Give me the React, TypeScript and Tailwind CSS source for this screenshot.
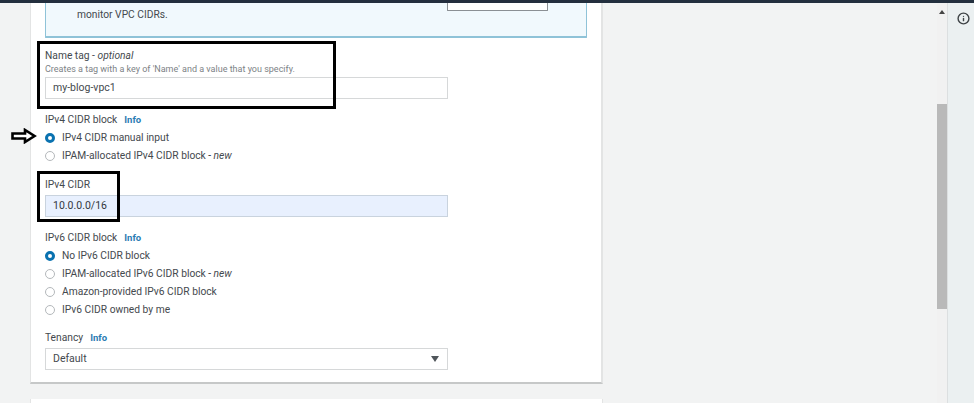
/**
 * Create VPC form
 * Screenshot of the VPC settings card with annotation boxes on top
 */

import { Info as InfoIcon } from 'lucide-react';

function Info() {
  return <span className="ml-[7px] text-[9.5px] font-bold leading-[14px] text-[#2b7cb3]">Info</span>;
}

function Radio({ label, checked, suffix }: { label: string; checked?: boolean; suffix?: string }) {
  return (
    <div className="flex h-[18px] items-center">
      {checked ? (
        <span className="h-[10px] w-[10px] rounded-full border-[3px] border-[#0a72b0] bg-white" />
      ) : (
        <span className="h-[10px] w-[10px] rounded-full border border-[#b4b8bb] bg-white" />
      )}
      <span className="ml-[7px] whitespace-nowrap text-[10.25px] text-[#44494e]">
        {label}
        {suffix && <i> - {suffix}</i>}
      </span>
    </div>
  );
}

function FieldLabel({ children }: { children: React.ReactNode }) {
  return <div className="flex h-[14px] items-center text-[10.25px] leading-[14px] text-[#44494e]">{children}</div>;
}

export default function App() {
  return (
    <div className="relative flex h-[403px] w-[974px] flex-col overflow-hidden bg-[#f2f3f3] font-['Roboto',sans-serif]">
      <div className="h-[3px] shrink-0 bg-[#232f3e]" />
      <div className="flex min-h-0 flex-1">
        <main className="min-w-0 flex-1 pl-[30px]">
          <section className="h-[381px] w-[573px] border-r-2 border-b-2 border-l border-r-[#e3e4e4] border-b-[#c6c8c8] border-l-[#e3e4e4] bg-white px-[14px]">
            <div className="relative h-[35px] w-[542px] rounded-b-[1px] border-r border-b-2 border-l border-[#8fc3d8] bg-[#f1f9fd] pl-[31px] pt-[5px]">
              <p className="text-[10.25px] leading-[14px] text-[#44494e]">monitor VPC CIDRs.</p>
              <div className="absolute left-[401px] top-0 h-[8px] w-[101px] rounded-b-[1px] border-r border-b border-l border-[#8b9094] bg-white" />
            </div>

            <div className="pt-[11px]">
              <FieldLabel>
                <span>
                  Name tag - <i>optional</i>
                </span>
              </FieldLabel>
              <p className="text-[9px] leading-[12px] text-[#7d8286]">Creates a tag with a key of 'Name' and a value that you specify.</p>
              <div className="mt-[2px] flex h-[22px] w-[403px] items-center border border-[#d6d8d9] bg-white pl-[7px] text-[10.5px] text-[#44494e]">
                my-blog-vpc1
              </div>
            </div>

            <div className="pt-[14px]">
              <FieldLabel>
                <span>IPv4 CIDR block</span>
                <Info />
              </FieldLabel>
              <div className="mt-[2px]">
                <Radio label="IPv4 CIDR manual input" checked />
                <Radio label="IPAM-allocated IPv4 CIDR block" suffix="new" />
              </div>
            </div>

            <div className="pt-[13px]">
              <FieldLabel>IPv4 CIDR</FieldLabel>
              <div className="mt-[3px] flex h-[22px] w-[403px] items-center border border-[#c9d3de] bg-[#e8f0fe] pl-[7px] text-[10.5px] text-[#33383c]">
                10.0.0.0/16
              </div>
            </div>

            <div className="pt-[14px]">
              <FieldLabel>
                <span>IPv6 CIDR block</span>
                <Info />
              </FieldLabel>
              <div className="mt-[2px]">
                <Radio label="No IPv6 CIDR block" checked />
                <Radio label="IPAM-allocated IPv6 CIDR block" suffix="new" />
                <Radio label="Amazon-provided IPv6 CIDR block" />
                <Radio label="IPv6 CIDR owned by me" />
              </div>
            </div>

            <div className="pt-[12px]">
              <FieldLabel>
                <span>Tenancy</span>
                <Info />
              </FieldLabel>
              <div className="mt-[3px] flex h-[22px] w-[403px] items-center justify-between border border-[#d6d8d9] bg-white pl-[7px] pr-[8px] text-[10.5px] text-[#44494e]">
                Default
                <span className="h-0 w-0 border-x-[4.5px] border-t-[6px] border-x-transparent border-t-[#50565b]" />
              </div>
            </div>
          </section>
          <div className="mt-[15px] h-[10px] w-[573px] border-x border-[#e3e4e4] bg-white" />
        </main>

        {/* scrollbar */}
        <div className="relative w-[11px] shrink-0 border-r border-[#dcdfe0] bg-[#f1f1f1]">
          <span className="absolute left-[2px] top-[7px] h-0 w-0 border-x-[3.5px] border-b-[4px] border-x-transparent border-b-[#444]" />
          <div className="absolute left-0 top-[101px] h-[205px] w-[10px] bg-[#b9b9b9]" />
        </div>

        <aside className="flex w-[26px] shrink-0 justify-center bg-[#ebf0f1] pl-[4px] pt-[9px]">
          <InfoIcon className="h-[13px] w-[13px] text-[#3f4447]" strokeWidth={2.6} />
        </aside>
      </div>

      {/* annotations drawn over the screenshot */}
      <div className="pointer-events-none absolute left-[37px] top-[41px] h-[68px] w-[299px] border-[3px] border-black" />
      <div className="pointer-events-none absolute left-[37px] top-[171px] h-[51px] w-[83px] border-[3px] border-black" />
      <svg className="absolute left-[11px] top-[128px]" width="26" height="16" viewBox="0 0 26 16">
        <path d="M1.5 5.5H14V2l9.5 6L14 14v-3.5H1.5z" fill="white" stroke="black" strokeWidth="2.6" />
      </svg>
    </div>
  );
}
